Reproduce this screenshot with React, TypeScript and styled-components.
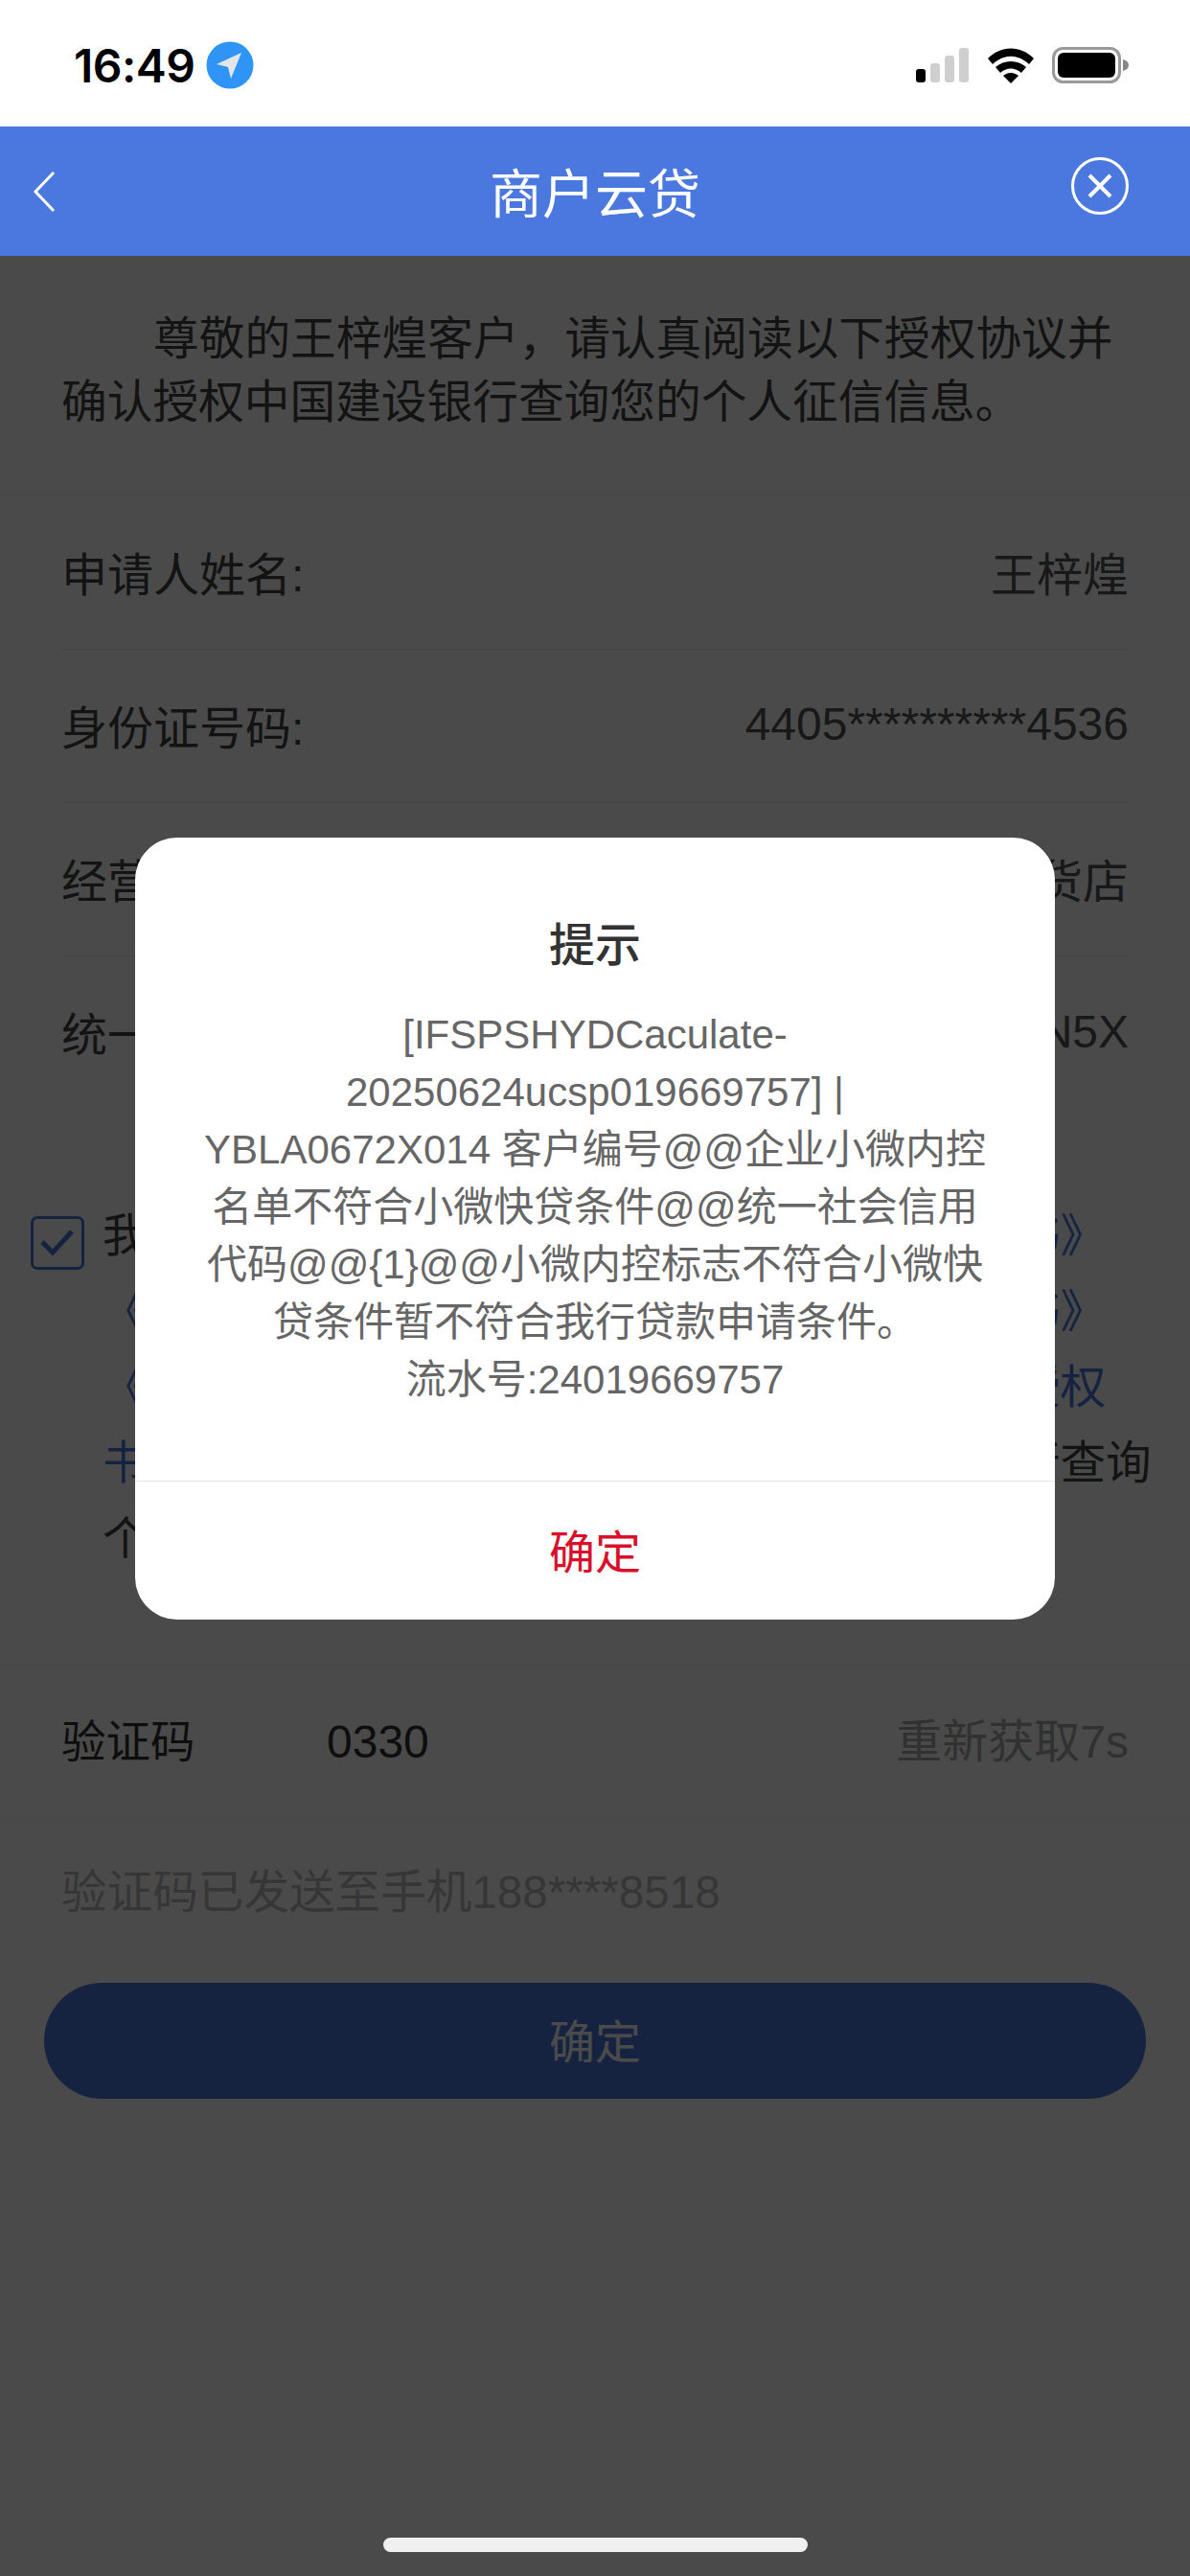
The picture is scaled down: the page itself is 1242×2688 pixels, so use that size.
import styled, { createGlobalStyle } from "styled-components";

const Global = createGlobalStyle`
  html, body {
    margin: 0;
    padding: 0;
    background: #fff;
  }
  * { box-sizing: border-box; }
`;

const fontStack = `"Liberation Sans", "Noto Sans CJK SC", sans-serif`;
const brandBlue = "#4b78df";

/* ── Shell ── */

const Screen = styled.div`
  position: relative;
  width: 1242px;
  height: 2688px;
  overflow: hidden;
  display: flex;
  flex-direction: column;
  font-family: ${fontStack};
  font-size: 48px;
  text-spacing-trim: space-all;
  color: #333;
`;

const StatusBar = styled.div`
  height: 132px;
  flex: none;
  display: flex;
  align-items: center;
  padding: 4px 64px 0 77px;
  background: #fff;
`;

const Clock = styled.span`
  font-family: Inter, "Liberation Sans", sans-serif;
  font-size: 48px;
  font-weight: 600;
  color: #000;
  letter-spacing: -0.5px;
`;

const StatusLeft = styled.div`
  display: flex;
  align-items: center;
  gap: 12px;
`;

const StatusRight = styled.div`
  margin-left: auto;
  display: flex;
  align-items: center;
  gap: 19px;
`;

const NavBar = styled.div`
  height: 135px;
  flex: none;
  display: flex;
  align-items: center;
  justify-content: space-between;
  padding: 0 64px 0 34px;
  background: ${brandBlue};
`;

const NavTitle = styled.div`
  font-size: 55px;
  padding-bottom: 3px;
  color: #fff;
`;

const NavBack = styled.div`
  width: 90px;
  display: flex;
  align-items: center;
`;

const NavClose = styled.div`
  width: 60px;
  margin-bottom: 12px;
  display: flex;
  align-items: center;
`;

const Content = styled.div`
  position: relative;
  flex: 1;
  background: #fff;
`;

const Dim = styled.div`
  position: absolute;
  inset: 0;
  background: rgba(0, 0, 0, 0.71);
`;

/* ── Page ── */

const Intro = styled.p`
  margin: 0;
  padding: 54px 64px 63px;
  font-size: 47.7px;
  line-height: 66px;
  text-indent: 96px;
  color: #444;
  border-bottom: 1px solid #f4f4f4;
`;

const Rows = styled.div`
  padding: 1px 64px 0;
`;

const Row = styled.div<{ $last?: boolean }>`
  height: 160px;
  padding-bottom: 4px;
  display: flex;
  align-items: center;
  justify-content: space-between;
  border-bottom: ${({ $last }) => ($last ? "none" : "1px solid #e8e8e8")};
`;

const Label = styled.span`
  color: #444;
`;

const Value = styled.span`
  color: #555;
`;

const Agreement = styled.div`
  margin-top: 92px;
  padding: 0 32px;
  display: flex;
  align-items: flex-start;
  gap: 19px;
`;

const CheckBox = styled.div`
  flex: none;
  width: 56px;
  height: 56px;
  margin-top: 19px;
  display: flex;
  align-items: center;
  justify-content: center;
  border: 3px solid ${brandBlue};
  border-radius: 7px;
`;

const AgreementText = styled.div`
  font-size: 47.6px;
  line-height: 79px;
  color: #444;
  white-space: nowrap;
`;

const Link = styled.span`
  color: ${brandBlue};
`;

const CodeRow = styled.div`
  margin-top: 92px;
  height: 162px;
  padding: 0 64px;
  display: flex;
  align-items: baseline;
  line-height: 160px;
  border-top: 1px solid #f4f4f4;
  border-bottom: 1px solid #f4f4f4;
`;

const CodeLabel = styled.span`
  width: 277px;
  font-size: 46.5px;
  color: #333;
`;

const CodeValue = styled.span`
  color: #333;
`;

const Resend = styled.span`
  margin-left: auto;
  color: #a8a8a8;
`;

const Hint = styled.div`
  padding: 0 64px;
  margin-top: 46px;
  font-size: 47.6px;
  line-height: 60px;
  color: #bbb;
`;

const SubmitButton = styled.div`
  margin: 64px 46px 0;
  height: 121px;
  padding-bottom: 5px;
  display: flex;
  align-items: center;
  justify-content: center;
  border-radius: 61px;
  background: ${brandBlue};
  color: #fff;
`;

/* ── Modal ── */

const Modal = styled.div`
  position: absolute;
  left: 141px;
  top: 874px;
  width: 960px;
  height: 816px;
  display: flex;
  flex-direction: column;
  background: #fff;
  border-radius: 44px;
`;

const ModalTitle = styled.div`
  margin-top: 80px;
  line-height: 66px;
  text-align: center;
  font-weight: 500;
  color: #333;
`;

const ModalMessage = styled.div`
  margin-top: 30px;
  padding: 0 68px;
  flex: 1;
  font-size: 42px;
  line-height: 60px;
  text-align: center;
  color: #666;
`;

const ModalAction = styled.div`
  height: 145px;
  padding-bottom: 5px;
  display: flex;
  align-items: center;
  justify-content: center;
  border-top: 1px solid #e8e8e8;
  color: #d9102c;
`;

const HomeBar = styled.div`
  position: absolute;
  left: 400px;
  bottom: 25px;
  width: 443px;
  height: 15px;
  border-radius: 8px;
  background: #f0f0f0;
`;

/* ── Icons ── */

const LocationIcon = () => (
	<svg width="50" height="50" viewBox="0 0 50 50">
		<circle cx="25" cy="25" r="24.5" fill="#2e95f6" />
		<path d="M37 12 L11 24 L23 27 L26 39 Z" fill="#e2e6ea" />
	</svg>
);

const SignalIcon = () => (
	<svg width="56" height="36" viewBox="0 0 56 36">
		<rect x="0" y="22" width="10" height="14" rx="3" fill="#000" />
		<rect x="15" y="16" width="10" height="20" rx="3" fill="#cfcfcf" />
		<rect x="30" y="8" width="10" height="28" rx="3" fill="#cfcfcf" />
		<rect x="45" y="0" width="10" height="36" rx="3" fill="#cfcfcf" />
	</svg>
);

const WifiIcon = () => (
	<svg width="48" height="37" viewBox="0 0 48 37">
		<path d="M0 11 C14 -3 34 -3 48 11 L43 17 C31 6 17 6 5 17 Z" fill="#000" />
		<path d="M8 20 C17 12 31 12 40 20 L35 26 C28 20 20 20 13 26 Z" fill="#000" />
		<path d="M16 29 C21 25 27 25 32 29 L24 37 Z" fill="#000" />
	</svg>
);

const BatteryIcon = () => (
	<svg width="80" height="38" viewBox="0 0 80 38">
		<rect x="1.5" y="1.5" width="69" height="35" rx="10" fill="none" stroke="#999" strokeWidth="3" />
		<rect x="6" y="6" width="60" height="26" rx="6" fill="#000" />
		<path d="M74 13 C78 14 80 16 80 19 C80 22 78 24 74 25 Z" fill="#888" />
	</svg>
);

const BackIcon = () => (
	<svg width="24" height="44" viewBox="0 0 24 44">
		<path d="M22 2 L3 22 L22 42" fill="none" stroke="#fff" strokeWidth="3" />
	</svg>
);

const CloseIcon = () => (
	<svg width="60" height="60" viewBox="0 0 60 60">
		<circle cx="30" cy="30" r="28.5" fill="none" stroke="#fff" strokeWidth="3" />
		<path d="M19 19 L41 41 M41 19 L19 41" fill="none" stroke="#fff" strokeWidth="4" />
	</svg>
);

const CheckIcon = () => (
	<svg width="36" height="30" viewBox="0 0 36 30">
		<path d="M2 14 L13 25 L33 3" fill="none" stroke={brandBlue} strokeWidth="5" />
	</svg>
);

/* ── Data ── */

const rows = [
	{ label: "申请人姓名:", value: "王梓煌" },
	{ label: "身份证号码:", value: "4405**********4536" },
	{ label: "经营者名称:", value: "杂货店" },
	{ label: "统一社会信用代码:", value: "9144**********N5X" },
];

export default function App() {
	return (
		<Screen>
			<Global />
			<StatusBar>
				<StatusLeft>
					<Clock>16:49</Clock>
					<LocationIcon />
				</StatusLeft>
				<StatusRight>
					<SignalIcon />
					<WifiIcon />
					<BatteryIcon />
				</StatusRight>
			</StatusBar>
			<NavBar>
				<NavBack>
					<BackIcon />
				</NavBack>
				<NavTitle>商户云贷</NavTitle>
				<NavClose>
					<CloseIcon />
				</NavClose>
			</NavBar>
			<Content>
				<Intro>尊敬的王梓煌客户，请认真阅读以下授权协议并确认授权中国建设银行查询您的个人征信信息。</Intro>
				<Rows>
					{rows.map((row, i) => (
						<Row key={row.label} $last={i === rows.length - 1}>
							<Label>{row.label}</Label>
							<Value>{row.value}</Value>
						</Row>
					))}
				</Rows>
				<Agreement>
					<CheckBox>
						<CheckIcon />
					</CheckBox>
					<AgreementText>
						我已阅读并同意<Link>《个人征信信息查询使用授权书》</Link>
						<br />
						<Link>《中国建设银行个人客户信息查询及使用授权书》</Link>
						<br />
						<Link>《中国建设银行企业及个人客户信息查询使用授权</Link>
						<br />
						<Link>书》</Link>，并同意授权中国建设银行及分支机构进行查询
						<br />
						个人征信信息。
					</AgreementText>
				</Agreement>
				<CodeRow>
					<CodeLabel>验证码</CodeLabel>
					<CodeValue>0330</CodeValue>
					<Resend>重新获取7s</Resend>
				</CodeRow>
				<Hint>验证码已发送至手机188****8518</Hint>
				<SubmitButton>确定</SubmitButton>
				<Dim />
			</Content>
			<Modal>
				<ModalTitle>提示</ModalTitle>
				<ModalMessage>
					[IFSPSHYDCaculate-20250624ucsp019669757] | YBLA0672X014 客户编号@@企业小微内控名单不符合小微快贷条件@@统一社会信用代码@@{"{1}"}@@小微内控标志不符合小微快贷条件暂不符合我行贷款申请条件。
					<br />
					流水号:24019669757
				</ModalMessage>
				<ModalAction>确定</ModalAction>
			</Modal>
			<HomeBar />
		</Screen>
	);
}
